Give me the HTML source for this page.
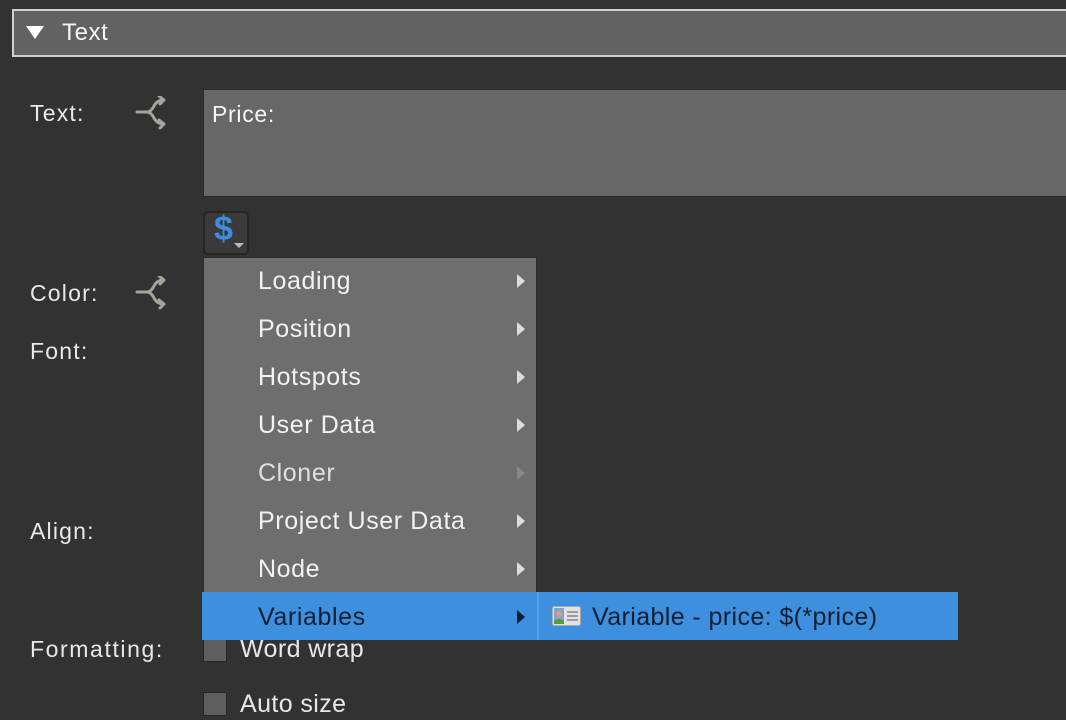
<!DOCTYPE html>
<html><head><style>
body{margin:0;width:1066px;height:720px;background:#323232;font-family:"Liberation Sans",sans-serif;color:#e8e8e8;position:relative;overflow:hidden}
.a{position:absolute}
.lbl{position:absolute;left:30px;font-size:23px;line-height:26px;letter-spacing:1.2px}
.mi{position:absolute;left:258px;font-size:25px;line-height:28px;color:#f2f2f2;letter-spacing:0.6px}
.ar{position:absolute;left:517px;width:0;height:0;border-top:7px solid transparent;border-bottom:7px solid transparent;border-left:8px solid #ddd}
.cb{position:absolute;left:203px;width:24px;height:24px;background:#5e5e5e;border:1px solid #262626;box-sizing:border-box}
</style></head><body>
<div class="a" style="left:12px;top:9px;width:1060px;height:48px;background:#626262;border:2px solid #d0d0d0;box-sizing:border-box"></div>
<div class="a" style="left:26px;top:26px;width:0;height:0;border-left:9px solid transparent;border-right:9px solid transparent;border-top:13px solid #fff"></div>
<div class="a" style="left:62px;top:19px;font-size:24px;color:#f5f5f5;letter-spacing:0.6px">Text</div>

<div class="lbl" style="top:100px">Text:</div>
<div class="lbl" style="top:280px">Color:</div>
<div class="lbl" style="top:338px">Font:</div>
<div class="lbl" style="top:518px">Align:</div>
<div class="lbl" style="top:636px;letter-spacing:1.6px">Formatting:</div>
<svg class="a" style="left:134px;top:96px" width="36" height="34"><g fill="none" stroke="#a5a59c" stroke-width="3" stroke-linecap="round" stroke-linejoin="round"><path d="M3 16H13Q17 16 20 10Q23 4 30 4M25 0L30 4L26 8"/><path d="M13 16Q17 16 20 22Q23 28 30 28M25 24L30 28L26 32"/></g></svg>
<svg class="a" style="left:134px;top:276px" width="36" height="34"><g fill="none" stroke="#a5a59c" stroke-width="3" stroke-linecap="round" stroke-linejoin="round"><path d="M3 16H13Q17 16 20 10Q23 4 30 4M25 0L30 4L26 8"/><path d="M13 16Q17 16 20 22Q23 28 30 28M25 24L30 28L26 32"/></g></svg>

<div class="a" style="left:203px;top:89px;width:870px;height:108px;background:#676767;border:1px solid #2a2a2a;box-sizing:border-box"></div>
<div class="a" style="left:212px;top:101px;font-size:23px;color:#f5f5f5;letter-spacing:0.7px">Price:</div>

<div class="a" style="left:203px;top:211px;width:46px;height:44px;background:#3a3a3a;border:2px solid #262626;border-radius:5px;box-sizing:border-box"></div>
<div class="a" style="left:214px;top:210px;font-size:34px;font-weight:bold;color:#3d8de0">$</div>
<div class="a" style="left:234px;top:243px;border-left:5px solid transparent;border-right:5px solid transparent;border-top:5px solid #bbb"></div>

<div class="cb" style="top:638px"></div>
<div class="a" style="left:240px;top:635px;font-size:25px;letter-spacing:0.4px">Word wrap</div>
<div class="cb" style="top:692px"></div>
<div class="a" style="left:240px;top:690px;font-size:25px;letter-spacing:0.4px">Auto size</div>

<div class="a" style="left:203px;top:257px;width:334px;height:336px;background:#6e6e6e;border:1px solid #2c2c2c;box-sizing:border-box"></div>
<div class="mi" style="top:267px">Loading</div><div class="ar" style="top:274px"></div>
<div class="mi" style="top:315px">Position</div><div class="ar" style="top:322px"></div>
<div class="mi" style="top:363px">Hotspots</div><div class="ar" style="top:370px"></div>
<div class="mi" style="top:411px">User Data</div><div class="ar" style="top:418px"></div>
<div class="mi" style="top:459px;color:#e0e0e0">Cloner</div><div class="ar" style="top:466px;border-left-color:#888"></div>
<div class="mi" style="top:507px">Project User Data</div><div class="ar" style="top:514px"></div>
<div class="mi" style="top:555px">Node</div><div class="ar" style="top:562px"></div>
<div class="a" style="left:202px;top:592px;width:336px;height:48px;background:#3f8fdf"></div>
<div class="mi" style="top:603px;color:#0f1f33">Variables</div><div class="ar" style="top:610px;border-left-color:#0f1f33"></div>
<div class="a" style="left:537px;top:592px;width:421px;height:48px;background:#3f8fdf;border-left:2px solid #5aa0e6;box-sizing:border-box"></div>
<svg class="a" style="left:552px;top:606px" width="29" height="20"><rect x="0.5" y="0.5" width="28" height="19" rx="2" fill="#e2e2e2" stroke="#aaa"/><rect x="2" y="2" width="10" height="16" fill="#7aa3d8"/><circle cx="7" cy="8" r="3" fill="#e0a070"/><path d="M2 18V15Q7 11 12 15V18Z" fill="#5a9a3a"/><g stroke="#888" stroke-width="1.5"><path d="M15 6H26M15 10H26M15 14H26"/></g></svg>
<div class="a" style="left:592px;top:603px;font-size:25px;color:#0f1f33;letter-spacing:0.4px">Variable - price: $(*price)</div>
</body></html>
